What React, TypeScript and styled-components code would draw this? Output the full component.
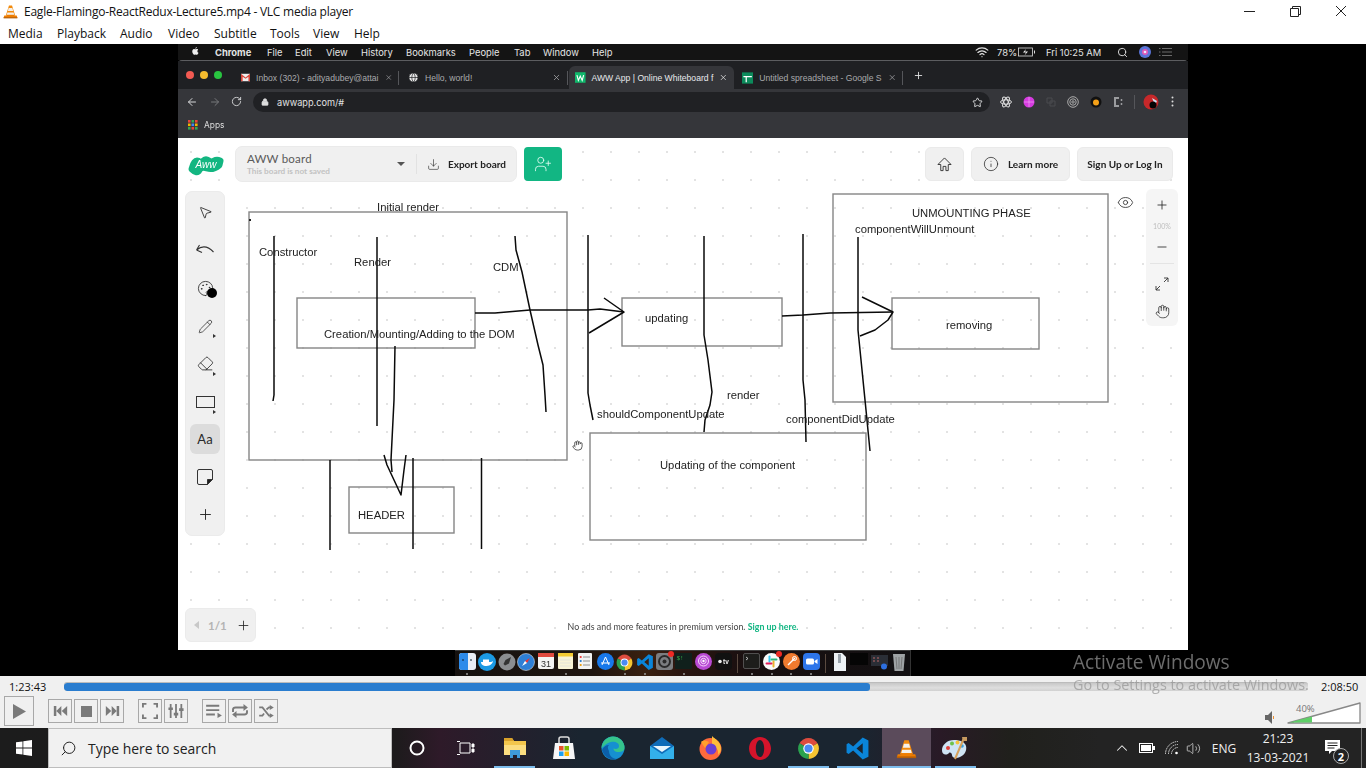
import React from 'react';
import styled, { createGlobalStyle } from 'styled-components';
import {
  Minus, X, Plus, Search, Star, ArrowLeft, ArrowRight, RotateCw, Lock, Globe,
  MousePointer2, Palette, Pencil, Eraser, Info, UserPlus, Download, Eye, Hand, ChevronUp, Volume2, Wifi,
} from 'lucide-react';

const Global = createGlobalStyle`
  html, body { margin: 0; padding: 0; background: #000; }
  * { box-sizing: border-box; }
`;

const Root = styled.div`
  position: relative; width: 1366px; height: 768px; overflow: hidden;
  display: flex; flex-direction: column; background: #fff;
  font-family: "Open Sans", "Noto Sans", sans-serif;
`;
const TitleBar = styled.div`
  height: 22px; background: #fff; display: flex; align-items: center; padding: 0 2px 0 3px;
  font-size: 12px; color: #111;
`;
const TitleText = styled.span` margin-left: 6px; flex: 1; letter-spacing: -0.24px; `;
const WinBtn = styled.div`
  width: 46px; height: 22px; display: flex; align-items: center; justify-content: center; color: #222;
`;
const MenuBar = styled.div`
  height: 22px; background: #fff; display: flex; align-items: center; padding-left: 8px; font-size: 12px; color: #111;
`;
const MenuItem = styled.span<{ $w: number }>` width: ${p => p.$w}px; `;

const VideoArea = styled.div` height: 632px; background: #000; display: flex; justify-content: center; `;
const Screen = styled.div` width: 1010px; display: flex; flex-direction: column; filter: blur(0.3px); `;

const MacBar = styled.div`
  height: 16px; background: #141414; display: flex; align-items: center; color: #e4e4e4;
  font-family: Inter, "Liberation Sans", sans-serif; font-size: 9.4px; padding-left: 13px;
`;
const MacItem = styled.span<{ $w: number; $b?: boolean }>`
  width: ${p => p.$w}px; font-weight: ${p => (p.$b ? 700 : 400)}; flex: none; white-space: nowrap;
`;
const MacRight = styled.div` margin-left: auto; display: flex; align-items: center; height: 100%; padding-right: 16px; `;
const MacGap = styled.i` width: 8px; display: block; flex: none; `;

const ChromeWin = styled.div`
  height: 78px; display: flex; flex-direction: column; border-top: 1px solid #5c5d60; border-radius: 4px 4px 0 0;
  font-family: Inter, "Liberation Sans", sans-serif; color: #c8c9cb; background: #202124;
`;
const TabStrip = styled.div` height: 28px; background: #1f2023; display: flex; align-items: flex-end; padding-left: 8px; `;
const Lights = styled.div` width: 49px; height: 100%; display: flex; align-items: center; gap: 6px; flex: none; padding-bottom: 1px; `;
const Light = styled.i<{ $c: string }>` width: 8px; height: 8px; border-radius: 50%; background: ${p => p.$c}; display: block; `;
const Tab = styled.div<{ $active?: boolean; $w: number }>`
  width: ${p => p.$w}px; height: 23px; display: flex; align-items: center; padding: 0 6px; gap: 6px; flex: none;
  font-family: "Liberation Sans", Arial, sans-serif; font-size: 8.6px; white-space: nowrap;
  background: ${p => (p.$active ? '#35363a' : 'transparent')};
  color: ${p => (p.$active ? '#e8eaed' : '#a9aaac')};
  border-radius: 6px 6px 0 0;
  margin: ${p => (p.$active ? '0 2px 0 1px' : '0')};
`;
const TabTitle = styled.span` flex: 1; `;
const TabSep = styled.i<{ $mr?: number }>`
  width: 1px; height: 14px; background: #55565a; display: block; margin: 0 ${p => p.$mr ?? 0}px 4px 0; flex: none;
`;
const NewTab = styled.div` width: 30px; align-self: center; display: flex; justify-content: center; flex: none; `;
const ToolRow = styled.div`
  height: 25px; background: #35363a; display: flex; align-items: center; padding-left: 8px; color: #d5d6d8;
`;
const NavBtn = styled.div<{ $w: number }>` width: ${p => p.$w}px; display: flex; flex: none; `;
const Omni = styled.div`
  width: 737px; height: 20px; border-radius: 10px; background: #202124; display: flex; align-items: center;
  padding: 0 7px 0 8px; font-size: 9.2px; color: #e0e1e3; gap: 8px; margin: 1px 0 0 2px;
`;
const OmniUrl = styled.span` flex: 1; `;
const ExtRow = styled.div` display: flex; align-items: center; margin-left: 5px; `;
const Ext = styled.div` width: 22.4px; display: flex; justify-content: center; align-items: center; flex: none; `;
const ExtSep = styled.i` width: 1px; height: 14px; background: #55565a; margin: 0 4px 0 5px; display: block; flex: none; `;
const BookRow = styled.div`
  height: 24px; background: #35363a; display: flex; align-items: center; padding: 0 0 2px 10px; gap: 6px; font-size: 8.4px; color: #dcdcdc;
`;

const Board = styled.div`
  position: relative; height: 512px; background-color: #fff;
  background-image: radial-gradient(circle, #e2e2e2 0.7px, transparent 1.1px);
  background-size: 28px 28px; background-position: -1px 0;
  display: flex; flex-direction: column; padding: 8px 7px; font-family: Lato, "Open Sans", sans-serif;
`;
const CanvasSvg = styled.svg` position: absolute; left: 0; top: 0; width: 1010px; height: 512px; `;
const Label = styled.span<{ $x: number; $y: number }>`
  position: absolute; left: ${p => p.$x - 178}px; top: ${p => p.$y - 138 - 7}px;
  font-family: "Liberation Sans", Arial, sans-serif; font-size: 11.25px; line-height: 14px; color: #222; white-space: nowrap;
`;
const CursorMark = styled.div` position: absolute; left: 394px; top: 302px; color: #222; display: flex; `;

const TopRow = styled.div` position: relative; height: 36px; display: flex; align-items: center; padding: 0 8px 0 2px; `;
const BoardBox = styled.div`
  width: 282px; height: 36px; margin-left: 10px; background: #f0f0f0; border: 1px solid #eaeaea; border-radius: 7px;
  display: flex; align-items: center; padding-left: 11px;
`;
const BoardNames = styled.div` flex: 1; display: flex; flex-direction: column; `;
const BoardName = styled.span` font-size: 11.5px; line-height: 14px; color: #5a5a5a; letter-spacing: 0.2px; `;
const BoardSub = styled.span` font-size: 8.2px; line-height: 11px; font-weight: 700; color: #c2c2c2; `;
const Caret = styled.i`
  width: 0; height: 0; border-left: 4px solid transparent; border-right: 4px solid transparent; border-top: 4px solid #555;
  margin-right: 11px; display: block;
`;
const VDiv = styled.i` width: 1px; height: 20px; background: #e2e2e2; display: block; `;
const Export = styled.div`
  display: flex; align-items: center; gap: 8px; padding: 0 10px; font-size: 10px; font-weight: 700; color: #222;
`;
const Invite = styled.div`
  width: 38px; height: 34px; margin-left: 7px; background: #12b683; border-radius: 4px; display: flex; align-items: center; justify-content: center; color: #e8fff6;
`;
const TopBtn = styled.div<{ $w: number; $ml: number }>`
  width: ${p => p.$w}px; height: 34px; margin-left: ${p => p.$ml}px; background: #f0f0f0; border: 1px solid #eaeaea; border-radius: 6px;
  display: flex; align-items: center; justify-content: center; gap: 9px; font-size: 10px; font-weight: 700; color: #222;
`;
const Spacer = styled.div` flex: 1; `;

const MidRow = styled.div` position: relative; display: flex; justify-content: space-between; margin-top: 9px; padding-right: 3px; `;
const LeftTools = styled.div`
  width: 40px; height: 345px; background: #f0f0f0; border: 1px solid #ebebeb; border-radius: 7px; padding-top: 2px;
  display: flex; flex-direction: column; align-items: center;
`;
const ToolSlot = styled.div` height: 37.75px; display: flex; align-items: center; justify-content: center; flex: none; `;
const ToolIcon = styled.div<{ $active?: boolean }>`
  position: relative; width: 30px; height: 30px; border-radius: 6px; display: flex; align-items: center; justify-content: center;
  background: ${p => (p.$active ? '#dcdcdc' : 'transparent')}; color: #2a2a2a; font-size: 13px;
`;
const MoreMark = styled.i`
  position: absolute; right: 4px; bottom: 3px; width: 0; height: 0; display: block;
  border-top: 2px solid transparent; border-bottom: 2px solid transparent; border-left: 3px solid #333;
`;
const ColorDot = styled.i`
  position: absolute; right: 3px; bottom: 5px; width: 10px; height: 10px; border-radius: 50%; background: #000; display: block;
`;
const RightSide = styled.div` display: flex; align-items: flex-start; gap: 12px; margin-top: -2px; `;
const EyeBtn = styled.div` width: 18px; height: 26px; display: flex; align-items: center; justify-content: center; color: #333; `;
const ZoomPanel = styled.div`
  width: 32px; height: 137px; background: #f5f5f5; border-radius: 6px; display: flex; flex-direction: column; align-items: center; color: #222;
`;
const ZoomCell = styled.div<{ $h: number }>` height: ${p => p.$h}px; display: flex; align-items: center; justify-content: center; flex: none; `;
const ZoomPct = styled.span` font-size: 7px; color: #bdbdbd; `;
const ZoomLine = styled.i` width: 24px; height: 1px; background: #e4e4e4; display: block; flex: none; margin-bottom: 5px; `;

const BottomRow = styled.div`
  position: relative; margin-top: auto; display: grid; grid-template-columns: 1fr auto 1fr; align-items: center;
`;
const PagePill = styled.div`
  width: 71px; height: 34px; background: #f0f0f0; border: 1px solid #ebebeb; border-radius: 6px; display: flex; align-items: center; padding-left: 8px; color: #222;
`;
const PageCaret = styled.i`
  width: 0; height: 0; border-top: 4px solid transparent; border-bottom: 4px solid transparent; border-right: 5px solid #c8c8c8; display: block;
`;
const PageNum = styled.span` font-size: 11.5px; font-weight: 700; color: #b4b4b4; margin: 0 9px 0 9px; `;
const Note = styled.div` font-size: 8.85px; color: #444; padding-top: 3px; `;
const NoteLink = styled.b` color: #12b683; `;

const DockRow = styled.div` height: 26px; background: #000; padding-left: 277px; `;
const DockPanel = styled.div`
  width: 456px; height: 26px; background: linear-gradient(90deg, #15110f 0%, #1f1510 30%, #3a2010 42%, #2a1510 50%, #180f10 65%, #121012 100%);
  border-top: 1px solid #3d3d3d; border-right: 1px solid #333; display: flex; padding-left: 2.5px;
`;
const DockItem = styled.div<{ $w?: number }>`
  position: relative; width: ${p => p.$w ?? 19.7}px; height: 25px; flex: none; display: flex; justify-content: center; padding-top: 2px;
`;
const DockDot = styled.i`
  position: absolute; left: 50%; bottom: 1px; width: 2px; height: 2px; margin-left: -1px; border-radius: 50%; background: #9a9a9a; display: block;
`;
const DockSep = styled.i` width: 1px; height: 19px; margin: 3px 4px 0; background: #5a4a40; display: block; flex: none; `;
const Badge = styled.i`
  position: absolute; right: 0; top: 0; width: 6px; height: 6px; border-radius: 50%; background: #ee2a24; display: block;
`;

const Controls = styled.div` height: 52px; background: #f0f0f0; display: flex; flex-direction: column; `;
const SeekRow = styled.div` height: 20px; display: flex; align-items: center; font-size: 11px; color: #111; padding-top: 1px; `;
const SeekTime = styled.span<{ $w: number; $pl: number }>` width: ${p => p.$w}px; padding-left: ${p => p.$pl}px; flex: none; `;
const Track = styled.div`
  width: 1244px; height: 9px; border-radius: 3px; background: linear-gradient(#c8c8c8, #dedede 60%, #d0d0d0);
  border-top: 1px solid #bcbcbc; overflow: hidden;
`;
const TrackFill = styled.div` height: 100%; background: #2a7dcf; border-radius: 3px; `;
const BtnRow = styled.div` height: 32px; display: flex; align-items: flex-start; padding-left: 4px; `;
const CtrlBtn = styled.div<{ $big?: boolean; $gap?: number }>`
  width: ${p => (p.$big ? 30 : 24)}px; height: ${p => (p.$big ? 30 : 24)}px; margin-top: ${p => (p.$big ? 0 : 3)}px;
  margin-left: ${p => p.$gap ?? 2}px; border: 1px solid #a8a8a8; display: flex; align-items: center; justify-content: center; color: #7a7a7a; flex: none;
`;
const VolumeWrap = styled.div` margin-left: auto; display: flex; align-items: flex-end; gap: 12px; margin-top: 6px; padding-right: 5px; `;

const Taskbar = styled.div`
  height: 40px; display: flex; align-items: stretch; color: #fff;
  background: linear-gradient(90deg, #1c1c1c 0, #1d1b1c 395px, #2e1a29 440px, #1a2530 580px, #1a2530 860px, #291a26 940px, #20201c 1010px, #232323 1100px);
`;
const StartBtn = styled.div` width: 48px; display: flex; align-items: center; justify-content: center; flex: none; `;
const SearchBox = styled.div`
  width: 344px; background: #f1f1f1; border: 1px solid #bdbdbd; display: flex; align-items: center; padding-left: 11px; gap: 11px;
  font-size: 13.95px; color: #222; flex: none;
`;
const SearchGlass = styled(Search)` transform: scaleX(-1); `;
const TaskItem = styled.div<{ $on?: boolean; $hl?: boolean }>`
  position: relative; width: 49px; flex: none; display: flex; align-items: center; justify-content: center;
  background: ${p => (p.$hl ? '#5b4b5b' : 'transparent')};
  ${p => p.$on ? `&::after { content: ""; position: absolute; left: ${p.$hl ? 0 : 4}px; right: ${p.$hl ? 0 : 4}px; bottom: 0; height: 2px; background: #7cbcec; }` : ''}
`;
const Tray = styled.div` margin-left: auto; display: flex; align-items: center; font-size: 12px; color: #f0f0f0; `;
const TrayItem = styled.div<{ $w: number }>` width: ${p => p.$w}px; display: flex; align-items: center; justify-content: center; flex: none; position: relative; `;
const Clock = styled.div` width: 68px; display: flex; flex-direction: column; align-items: center; line-height: 19px; font-size: 12px; flex: none; `;
const ShowDesktop = styled.i` width: 5px; height: 40px; margin-left: 7px; border-left: 1px solid #777; display: block; `;
const NotifBadge = styled.span`
  position: absolute; left: 21px; top: 8px; width: 16px; height: 16px; border-radius: 50%; background: #222; border: 1px solid #aaa;
  display: flex; align-items: center; justify-content: center; font-size: 11px; font-weight: 700; color: #fff;
`;

const Activate = styled.div`
  position: absolute; left: 1073px; top: 650px; color: rgba(150,150,150,0.72); pointer-events: none;
  display: flex; flex-direction: column;
`;
const ActTitle = styled.span` font-size: 19.1px; line-height: 24px; `;
const ActSub = styled.span` font-size: 14.4px; line-height: 18px; margin-top: 2px; white-space: nowrap; `;

/* ---- drawings ---- */
const VlcIcon = ({ s = 16 }: { s?: number }) => (
  <svg width={s} height={s} viewBox="0 0 24 24">
    <path d="M9.5 2.5h5l5 16H4.5z" fill="#f28a0c" />
    <path d="M9 6.5h6l1.2 4.5H7.8zM7 13.5h10l1 3.5H6z" fill="#f4f0ea" />
    <path d="M2 18.5h4v-1h12v1h4l1 3.5H1z" fill="#ef7d00" />
    <path d="M1 21h22v2H1z" fill="#b85f05" />
  </svg>
);
const ChromeIcon = ({ s = 18 }: { s?: number }) => (
  <svg width={s} height={s} viewBox="0 0 24 24">
    <path d="M12 12L3.34 7A10 10 0 0 1 20.66 7z" fill="#dd4b3e" />
    <path d="M12 12L20.66 7A10 10 0 0 1 12 22z" fill="#f5c431" />
    <path d="M12 12L12 22A10 10 0 0 1 3.34 7z" fill="#2aa24f" />
    <circle cx="12" cy="12" r="5" fill="#fff" />
    <circle cx="12" cy="12" r="3.9" fill="#4a8af4" />
  </svg>
);
const VsIcon = ({ s = 18 }: { s?: number }) => (
  <svg width={s} height={s} viewBox="0 0 24 24">
    <path fillRule="evenodd" d="M17 1.5L22.5 4.2V19.8L17 22.5L7.8 14L3.5 17.2L1.5 16V8L3.5 6.8L7.8 10zM17 7L11 12L17 17z" fill="#0a85d9" />
  </svg>
);

const Prev = () => <svg width="15" height="12" viewBox="0 0 18 14"><path d="M1 1h3v12H1zM10 1v12L4 7zM17 1v12L10.5 7z" fill="currentColor" /></svg>;
const Next = () => <svg width="15" height="12" viewBox="0 0 18 14"><path d="M1 1v12l6.500-6zM8 1v12l6-6zM14 1h3v12h-3z" fill="currentColor" /></svg>;
const Fs = () => <svg width="16" height="16" viewBox="0 0 18 18"><path d="M1 5V1h4M13 1h4v4M17 13v4h-4M5 17H1v-4" fill="none" stroke="currentColor" strokeWidth="2.2" /></svg>;
const Ext3 = () => <svg width="16" height="16" viewBox="0 0 18 18"><path d="M3 1v16M9 1v16M15 1v16" stroke="currentColor" strokeWidth="2" /><path d="M0.500 5h5v3h-5zM6.500 11h5v3h-5zM12.500 6h5v3h-5z" fill="currentColor" /></svg>;
const PlaylistI = () => <svg width="16" height="14" viewBox="0 0 18 16"><path d="M0 2h15M0 7h15M0 12h10" stroke="currentColor" strokeWidth="2.2" /><path d="M13 10v6l5-3z" fill="currentColor" /></svg>;
const LoopI = () => <svg width="16" height="14" viewBox="0 0 18 16"><path d="M1 9V6.500Q1 4 4 4H14M17 7v2.500Q17 12 14 12H4" fill="none" stroke="currentColor" strokeWidth="2.2" /><path d="M13 0l5 4-5 4zM5 8L0 12l5 4z" fill="currentColor" /></svg>;
const ShuffleI = () => <svg width="15" height="13" viewBox="0 0 18 16"><path d="M0 3h4l8 10h2M0 13h4l2-2.500M9 5.500L12 3h2" fill="none" stroke="currentColor" strokeWidth="2.2" /><path d="M13 0l5 3-5 3zM13 10l5 3-5 3z" fill="currentColor" /></svg>;

const Sketch = () => (
  <CanvasSvg viewBox="178 138 1010 512">
    <g fill="none" stroke="#858585" strokeWidth="1.4">
      <rect x="249" y="212" width="318" height="248" />
      <rect x="297" y="298" width="178" height="50" />
      <rect x="622" y="298" width="160" height="48" />
      <rect x="892" y="298" width="147" height="51" />
      <rect x="833" y="194" width="275" height="208" />
      <rect x="590" y="433" width="276" height="107" />
      <rect x="349" y="487" width="105" height="46" />
    </g>
    <g fill="none" stroke="#0a0a0a" strokeWidth="1.5" strokeLinejoin="round">
      <path d="M274 236V395L273 401" />
      <path d="M377 237V426" />
      <path d="M515 236L516 250L522 272L530 310L538 345L543 365L545 395L546 412" />
      <path d="M588 235V393L590 405L593 420" />
      <path d="M704 236V335L708 360L712 392L710 405L705 420L704 432" />
      <path d="M803 234V380L805 400L806 442" />
      <path d="M858 237V330L862 370L866 410L870 451" />
      <path d="M475 313H495L530 310H588L600 309L624 312" />
      <path d="M604 298L624 312L589 333" />
      <path d="M782 316L803 315L830 313L893 312" />
      <path d="M862 297L893 312L888 320L875 330L860 336" />
      <path d="M395 346L394 400L391 460L392 472" />
      <path d="M384 455L387 465L394 480L401 495L404 470L406 455" />
      <path d="M330 460V550" />
      <path d="M413 458V549" />
      <path d="M481.500 458V549" />
    </g>
    <rect x="249" y="219" width="2" height="2" fill="#222" />
  </CanvasSvg>
);

const labels: [string, number, number][] = [
  ['Initial render', 377, 207], ['Constructor', 259, 252], ['Render', 354, 262], ['CDM', 493, 267],
  ['Creation/Mounting/Adding to the DOM', 324, 334], ['updating', 645, 318], ['removing', 946, 325],
  ['UNMOUNTING PHASE', 912, 213], ['componentWillUnmount', 855, 229], ['render', 727, 395],
  ['shouldComponentUpdate', 597, 414], ['componentDidUpdate', 786, 419],
  ['Updating of the component', 660, 465], ['HEADER', 358, 515],
];

const Logo = () => (
  <svg width="38" height="24" viewBox="0 0 38 24">
    <path d="M5 17Q7 9 10 9T14 13Q17 7 20 8T24 12Q28 7 33 9L32 13Q26 18 20 16T12 18T5 17z" fill="#13b681" stroke="#13b681" strokeWidth="7" strokeLinejoin="round" />
    <text x="19" y="16" textAnchor="middle" fontFamily="Liberation Sans" fontStyle="italic" fontSize="10" fill="#fff">Aww</text>
  </svg>
);

const dockIcons = {
  finder: <svg width="17" height="17" viewBox="0 0 17 17"><rect width="17" height="17" rx="3" fill="#e9eef5" /><path d="M0 3a3 3 0 0 1 3-3h6v17H3a3 3 0 0 1-3-3z" fill="#2d8bea" /><path d="M4 6v2M12 6v2" stroke="#123" /></svg>,
  docker: <svg width="18" height="18" viewBox="0 0 18 18"><circle cx="9" cy="9" r="9" fill="#1b9ae4" /><path d="M3 9h10c1 0 1.500-1 2-1-.2 2-2.500 5-6.500 5S3 11 3 9z" fill="#fff" /><path d="M5 6.500h6V9H5z" fill="#fff" /></svg>,
  rocket: <svg width="18" height="18" viewBox="0 0 18 18"><circle cx="9" cy="9" r="8.500" fill="#8b8d90" /><path d="M13 4L7.500 7 5.500 11l1.500 1.500L11 10.500z" fill="#333" /></svg>,
  safari: <svg width="18" height="18" viewBox="0 0 18 18"><circle cx="9" cy="9" r="8.500" fill="#2e7fd6" stroke="#ddd" strokeWidth=".6" /><path d="M13 5L8 8l2 2z" fill="#e33" /><path d="M5 13l3-5 2 2z" fill="#fff" /></svg>,
  calendar: <svg width="16" height="16" viewBox="0 0 16 16"><rect width="16" height="16" rx="2" fill="#f4f4f4" /><rect width="16" height="4" fill="#e04a3f" /><text x="8" y="13.500" fontSize="9" textAnchor="middle" fontFamily="Liberation Sans" fill="#333">31</text></svg>,
  notes: <svg width="15" height="16" viewBox="0 0 15 16"><rect width="15" height="16" rx="1" fill="#f8f3d6" /><rect width="15" height="3.500" fill="#f4cb33" /><path d="M2 7h11M2 10h11M2 13h11" stroke="#ddd" strokeWidth=".7" /></svg>,
  reminders: <svg width="14" height="16" viewBox="0 0 14 16"><rect width="14" height="16" rx="1" fill="#f2f2f2" /><path d="M5 4h7M5 8h7M5 12h7" stroke="#777" strokeWidth=".8" /><circle cx="2.700" cy="4" r="1.100" fill="#e33" /><circle cx="2.700" cy="8" r="1.100" fill="#27c" /><circle cx="2.700" cy="12" r="1.100" fill="#e90" /></svg>,
  app: <svg width="17" height="17" viewBox="0 0 17 17"><circle cx="8.500" cy="8.500" r="8.500" fill="#1878ea" /><path d="M8.500 4l-3.500 8M8.500 4l3.500 8M4 10h9" stroke="#fff" strokeWidth="1" fill="none" /></svg>,
  settings: <svg width="17" height="17" viewBox="0 0 17 17"><rect width="17" height="17" rx="3" fill="#7b7d80" /><circle cx="8.500" cy="8.500" r="5.500" fill="none" stroke="#2a2a2a" strokeWidth="2" /><circle cx="8.500" cy="8.500" r="2" fill="#2a2a2a" /></svg>,
  term2: <svg width="17" height="16" viewBox="0 0 17 16"><rect width="17" height="16" rx="1" fill="#10201c" /><text x="1.500" y="7" fontSize="6" fontFamily="Liberation Mono" fill="#39b54a">$!</text></svg>,
  podcast: <svg width="17" height="17" viewBox="0 0 17 17"><circle cx="8.500" cy="8.500" r="8.500" fill="#b94ad4" /><circle cx="8.500" cy="8" r="5" fill="none" stroke="#f4d9fa" /><circle cx="8.500" cy="8" r="2.700" fill="none" stroke="#f4d9fa" /><circle cx="8.500" cy="8" r="1.200" fill="#fff" /></svg>,
  tv: <svg width="17" height="17" viewBox="0 0 17 17"><rect width="17" height="17" rx="4" fill="#111" /><circle cx="5" cy="8.500" r="1.800" fill="#eee" /><text x="11" y="11" fontSize="6.500" textAnchor="middle" fontFamily="Liberation Sans" fontWeight="700" fill="#eee">tv</text></svg>,
  terminal: <svg width="17" height="16" viewBox="0 0 17 16"><rect x=".5" y=".5" width="16" height="15" rx="1.500" fill="#1d1d1b" stroke="#777" strokeWidth=".6" /><path d="M3 4l2 1.500L3 7" stroke="#ddd" fill="none" strokeWidth=".8" /></svg>,
  slack: <svg width="17" height="17" viewBox="0 0 17 17"><circle cx="8.500" cy="8.500" r="8.500" fill="#fafafa" /><path d="M6.500 3.500v5" stroke="#36c5f0" strokeWidth="2" strokeLinecap="round" /><path d="M8.500 6.500h5" stroke="#2eb67d" strokeWidth="2" strokeLinecap="round" /><path d="M10.500 8.500v5" stroke="#ecb22e" strokeWidth="2" strokeLinecap="round" /><path d="M3.500 10.500h5" stroke="#e01e5a" strokeWidth="2" strokeLinecap="round" /></svg>,
  postman: <svg width="17" height="17" viewBox="0 0 17 17"><circle cx="8.500" cy="8.500" r="8.500" fill="#ef7a2f" /><path d="M5 12L12 5" stroke="#fff" strokeWidth="1.500" /><circle cx="11.500" cy="5.500" r="2" fill="none" stroke="#fff" /></svg>,
  zoom: <svg width="17" height="17" viewBox="0 0 17 17"><rect width="17" height="17" rx="4" fill="#2d75ea" /><rect x="3" y="5.500" width="8" height="6" rx="1.500" fill="#fff" /><path d="M11.500 8l3-2v5l-3-2z" fill="#fff" /></svg>,
  file: <svg width="14" height="18" viewBox="0 0 14 18"><path d="M1 0h8l4 4v14H1z" fill="#eef2f6" /><path d="M5 1h3v9H5z" fill="#9aa3ac" /></svg>,
  black: <svg width="18" height="12" viewBox="0 0 18 12"><rect width="18" height="12" fill="#050505" /></svg>,
  shot: <svg width="17" height="17" viewBox="0 0 17 17"><rect y="2" width="17" height="11" fill="#2a2e36" /><path d="M2 5h2M6 5h2M2 8h2M6 8h2" stroke="#b66" /><circle cx="13" cy="13.500" r="3" fill="#2d6fe0" /></svg>,
  trash: <svg width="14" height="18" viewBox="0 0 14 18"><path d="M1 1h12l-1.500 17h-9z" fill="#9fa3a5" /><path d="M4 4l1 12M7 4v12M10 4l-1 12" stroke="#666" strokeWidth=".7" /></svg>,
};

const App: React.FC = () => (
  <Root>
    <Global />
    <TitleBar>
      <VlcIcon s={15} />
      <TitleText>Eagle-Flamingo-ReactRedux-Lecture5.mp4 - VLC media player</TitleText>
      <WinBtn><svg width="11" height="11"><path d="M0 5.500h11" stroke="#222" /></svg></WinBtn>
      <WinBtn><svg width="11" height="11"><path d="M.5 2.500h8v8h-8zM2.500 2.500v-2h8v8h-2" fill="none" stroke="#222" /></svg></WinBtn>
      <WinBtn><svg width="12" height="12"><path d="M1 1l10 10M11 1L1 11" stroke="#222" /></svg></WinBtn>
    </TitleBar>
    <MenuBar>
      {([['Media', 49], ['Playback', 63], ['Audio', 48], ['Video', 46], ['Subtitle', 56], ['Tools', 43], ['View', 41], ['Help', 40]] as [string, number][]).map(([t, w]) => (
        <MenuItem key={t} $w={w}>{t}</MenuItem>
      ))}
    </MenuBar>
    <VideoArea>
      <Screen>
        <MacBar>
          <MacItem $w={24}>
            <svg width="9" height="10" viewBox="0 0 24 24" fill="#eee"><path d="M17 12.500c0-2.600 2.100-3.800 2.200-3.900-1.200-1.800-3-2-3.700-2-1.600-.2-3 .9-3.800.9s-2-.9-3.300-.9C6.700 6.700 5.100 7.700 4.200 9.200c-1.800 3.100-.5 7.800 1.300 10.300.9 1.200 1.900 2.600 3.300 2.500 1.300-.1 1.800-.8 3.400-.8s2 .8 3.400.8 2.300-1.200 3.200-2.500c1-1.400 1.400-2.800 1.400-2.900-.1 0-3.200-1.200-3.200-4.100zM14.400 4.800c.7-.9 1.200-2.100 1.100-3.300-1 0-2.300.7-3 1.500-.7.800-1.300 2-1.100 3.200 1.100.1 2.300-.6 3-1.400z" /></svg>
          </MacItem>
          <MacItem $w={52} $b>Chrome</MacItem>
          <MacItem $w={28}>File</MacItem>
          <MacItem $w={31}>Edit</MacItem>
          <MacItem $w={35}>View</MacItem>
          <MacItem $w={45}>History</MacItem>
          <MacItem $w={63}>Bookmarks</MacItem>
          <MacItem $w={45}>People</MacItem>
          <MacItem $w={29}>Tab</MacItem>
          <MacItem $w={49}>Window</MacItem>
          <MacItem $w={30}>Help</MacItem>
          <MacRight>
            <Wifi size={14} strokeWidth={2} />
            <MacGap />
            <MacItem $w={21}>78%</MacItem>
            <svg width="28" height="10" viewBox="0 0 28 10"><rect x=".5" y="1" width="14" height="8" fill="none" stroke="#ddd" strokeWidth=".8" /><path d="M8 2L5 5.500h3L6.500 8.500 10 4.500H7z" fill="#eee" /><rect x="16" y="3.500" width="1" height="3" fill="#ddd" /></svg>
            <MacItem $w={71}>Fri 10:25 AM</MacItem>
            <Search size={11} />
            <svg width="31" height="12" viewBox="0 0 31 12"><circle cx="17" cy="6" r="6" fill="#5a74d8" /><circle cx="17" cy="6" r="3" fill="#e05ab8" /><circle cx="17" cy="6" r="1.300" fill="#e8e8ff" /></svg>
            <svg width="13" height="10" viewBox="0 0 13 10"><path d="M3 1.500h10M3 5h10M3 8.500h10M0 1.500h1.500M0 5h1.500M0 8.500h1.500" stroke="#6a6a6a" /></svg>
          </MacRight>
        </MacBar>
        <ChromeWin>
          <TabStrip>
            <Lights><Light $c="#f25a52" /><Light $c="#f5bb2e" /><Light $c="#29c440" /></Lights>
            <Tab $w={163}>
              <svg width="11" height="9" viewBox="0 0 11 9"><rect width="11" height="9" fill="#eee" /><path d="M0 0l5.500 4.500L11 0v9H9V3.500L5.500 6 2 3.500V9H0z" fill="#d8463a" /></svg>
              <TabTitle>Inbox (302) - adityadubey@attai</TabTitle>
              <X size={9} />
            </Tab>
            <TabSep $mr={3} />
            <Tab $w={165}>
              <Globe size={11} color="#1f2023" fill="#e8e8e8" strokeWidth={1.5} />
              <TabTitle>Hello, world!</TabTitle>
              <X size={9} />
            </Tab>
            <TabSep />
            <Tab $w={165} $active>
              <svg width="11" height="11" viewBox="0 0 11 11"><rect width="11" height="11" fill="#10b86c" /><path d="M2 3l1.500 5.500L5.500 4l2 4.500L9 3" fill="none" stroke="#fff" strokeWidth="1.200" /></svg>
              <TabTitle>AWW App | Online Whiteboard f</TabTitle>
              <X size={9} color="#eee" />
            </Tab>
            <Tab $w={166}>
              <svg width="12" height="12" viewBox="0 0 12 12"><rect width="12" height="12" fill="#0c8a5b" /><path d="M1.500 4.500h9M4.500 4.500v6" stroke="#fff" strokeWidth="1.300" /></svg>
              <TabTitle>Untitled spreadsheet - Google S</TabTitle>
              <X size={9} />
            </Tab>
            <TabSep />
            <NewTab><Plus size={11} color="#ddd" /></NewTab>
          </TabStrip>
          <ToolRow>
            <NavBtn $w={23}><ArrowLeft size={12} /></NavBtn>
            <NavBtn $w={22}><ArrowRight size={12} color="#77787b" /></NavBtn>
            <NavBtn $w={20}><RotateCw size={11} /></NavBtn>
            <Omni>
              <Lock size={8} fill="#ddd" />
              <OmniUrl>awwapp.com/#</OmniUrl>
              <Star size={11} />
            </Omni>
            <ExtRow>
              <Ext><svg width="12" height="12" viewBox="0 0 12 12" fill="none" stroke="#ddd" strokeWidth="1"><ellipse cx="6" cy="6" rx="5.500" ry="2.200" /><ellipse cx="6" cy="6" rx="5.500" ry="2.200" transform="rotate(60 6 6)" /><ellipse cx="6" cy="6" rx="5.500" ry="2.200" transform="rotate(120 6 6)" /></svg></Ext>
              <Ext><svg width="12" height="12"><circle cx="6" cy="6" r="5.500" fill="#d63be0" /><path d="M1 6h10M6 1v10" stroke="#f3b3f6" strokeWidth=".6" /></svg></Ext>
              <Ext><svg width="12" height="12"><path d="M2 2h5v5H2zM5 5h5v5H5z" fill="none" stroke="#4a4b4e" /></svg></Ext>
              <Ext><svg width="12" height="12" fill="none" stroke="#aaa"><circle cx="6" cy="6" r="5.300" /><circle cx="6" cy="6" r="3.200" /><circle cx="6" cy="6" r="1.200" /></svg></Ext>
              <Ext><svg width="12" height="12"><circle cx="6" cy="6" r="5.500" fill="#111" /><circle cx="6" cy="6.500" r="3" fill="#f4a018" /></svg></Ext>
              <Ext><svg width="12" height="12"><path d="M7 2H3v8h4" fill="none" stroke="#9a9b9e" strokeWidth="2" /><path d="M9.500 3v2M9.500 7v2" stroke="#9a9b9e" strokeWidth="1.500" /></svg></Ext>
              <ExtSep />
              <Ext><svg width="16" height="16"><circle cx="8" cy="8" r="7.500" fill="#c6282a" /><path d="M9 4l5 3-2 4z" fill="#cfe3f4" /><circle cx="10" cy="11" r="3.500" fill="#050505" /></svg></Ext>
              <Ext><svg width="3" height="11"><circle cx="1.500" cy="1.500" r="1" fill="#ddd" /><circle cx="1.500" cy="5.500" r="1" fill="#ddd" /><circle cx="1.500" cy="9.500" r="1" fill="#ddd" /></svg></Ext>
            </ExtRow>
          </ToolRow>
          <BookRow>
            <svg width="10" height="10" viewBox="0 0 10 10">
              {[0, 1, 2].flatMap(r => [0, 1, 2].map(c => (
                <rect key={`${r}${c}`} x={c * 3.5} y={r * 3.5} width="2.600" height="2.600" fill={['#e8453c', '#f4b400', '#34a853', '#4285f4'][(r + c * 2) % 4]} />
              )))}
            </svg>
            <span>Apps</span>
          </BookRow>
        </ChromeWin>
        <Board>
          <Sketch />
          {labels.map(([t, x, y]) => <Label key={t} $x={x} $y={y}>{t}</Label>)}
          <CursorMark><Hand size={11} fill="#fff" strokeWidth={1.6} /></CursorMark>
          <TopRow>
            <Logo />
            <BoardBox>
              <BoardNames>
                <BoardName>AWW board</BoardName>
                <BoardSub>This board is not saved</BoardSub>
              </BoardNames>
              <Caret />
              <VDiv />
              <Export><Download size={13} strokeWidth={1.1} />Export board</Export>
            </BoardBox>
            <Invite><UserPlus size={18} strokeWidth={1.1} /></Invite>
            <Spacer />
            <TopBtn $w={39} $ml={0}>
              <svg width="15" height="15" viewBox="0 0 16 16" fill="none" stroke="#333" strokeWidth="1" strokeLinejoin="round"><path d="M1 8L8 1l7 7h-3v6.500H9.500V10h-3v4.500H4V8z" /></svg>
            </TopBtn>
            <TopBtn $w={99} $ml={7}><Info size={16} strokeWidth={1.1} />Learn more</TopBtn>
            <TopBtn $w={96} $ml={7}>Sign Up or Log In</TopBtn>
          </TopRow>
          <MidRow>
            <LeftTools>
              <ToolSlot><ToolIcon><MousePointer2 size={15} strokeWidth={1.4} /></ToolIcon></ToolSlot>
              <ToolSlot><ToolIcon><svg width="20" height="14" viewBox="0 0 20 14" fill="none" stroke="#333" strokeWidth="1.1"><path d="M1.500 6Q10 -1 18.500 8M1.500 6L4.500 1M1.500 6L7 8.500" /></svg></ToolIcon></ToolSlot>
              <ToolSlot><ToolIcon><Palette size={17} strokeWidth={1.2} /><ColorDot /></ToolIcon></ToolSlot>
              <ToolSlot><ToolIcon><Pencil size={15} strokeWidth={1.2} /><MoreMark /></ToolIcon></ToolSlot>
              <ToolSlot><ToolIcon><Eraser size={17} strokeWidth={1.2} /><MoreMark /></ToolIcon></ToolSlot>
              <ToolSlot><ToolIcon><svg width="19" height="12" viewBox="0 0 19 12"><rect x=".5" y=".5" width="18" height="11" fill="none" stroke="#333" /></svg><MoreMark /></ToolIcon></ToolSlot>
              <ToolSlot><ToolIcon $active>Aa</ToolIcon></ToolSlot>
              <ToolSlot><ToolIcon><svg width="16" height="16" viewBox="0 0 16 16" fill="none" stroke="#333" strokeWidth="1"><path d="M10.500 15.500H2a1.500 1.500 0 0 1-1.500-1.500V2A1.500 1.500 0 0 1 2 .5h12A1.500 1.500 0 0 1 15.500 2v8.500z" /><path d="M10.500 15.500v-5h5z" fill="#222" /></svg></ToolIcon></ToolSlot>
              <ToolSlot><ToolIcon><Plus size={17} strokeWidth={1.3} color="#222" /></ToolIcon></ToolSlot>
            </LeftTools>
            <RightSide>
              <EyeBtn><Eye size={17} strokeWidth={1.2} /></EyeBtn>
              <ZoomPanel>
                <ZoomCell $h={32}><Plus size={14} strokeWidth={1.4} /></ZoomCell>
                <ZoomCell $h={10}><ZoomPct>100%</ZoomPct></ZoomCell>
                <ZoomCell $h={32}><Minus size={14} strokeWidth={1.4} /></ZoomCell>
                <ZoomLine />
                <ZoomCell $h={30}><svg width="16" height="16" viewBox="0 0 16 16" fill="none" stroke="#333" strokeWidth=".9"><path d="M10 2h4v4M14 2L10 6M6 14H2v-4M2 14l4-4" /></svg></ZoomCell>
                <ZoomCell $h={24}><Hand size={15} strokeWidth={1.2} /></ZoomCell>
              </ZoomPanel>
            </RightSide>
          </MidRow>
          <BottomRow>
            <PagePill>
              <PageCaret />
              <PageNum>1/1</PageNum>
              <Plus size={15} strokeWidth={1.3} />
            </PagePill>
            <Note>No ads and more features in premium version. <NoteLink>Sign up here.</NoteLink></Note>
            <Spacer />
          </BottomRow>
        </Board>
        <DockRow>
          <DockPanel>
            <DockItem>{dockIcons.finder}<DockDot /></DockItem>
            <DockItem>{dockIcons.docker}</DockItem>
            <DockItem>{dockIcons.rocket}</DockItem>
            <DockItem>{dockIcons.safari}</DockItem>
            <DockItem>{dockIcons.calendar}</DockItem>
            <DockItem>{dockIcons.notes}<DockDot /></DockItem>
            <DockItem>{dockIcons.reminders}</DockItem>
            <DockItem>{dockIcons.app}</DockItem>
            <DockItem><ChromeIcon s={19} /><DockDot /></DockItem>
            <DockItem><VsIcon s={18} /><DockDot /></DockItem>
            <DockItem>{dockIcons.settings}<Badge /></DockItem>
            <DockItem>{dockIcons.term2}<DockDot /></DockItem>
            <DockItem>{dockIcons.podcast}</DockItem>
            <DockItem>{dockIcons.tv}</DockItem>
            <DockSep />
            <DockItem>{dockIcons.terminal}<DockDot /></DockItem>
            <DockItem>{dockIcons.slack}<Badge /><DockDot /></DockItem>
            <DockItem>{dockIcons.postman}<DockDot /></DockItem>
            <DockItem>{dockIcons.zoom}<DockDot /></DockItem>
            <DockSep />
            <DockItem>{dockIcons.file}</DockItem>
            <DockItem>{dockIcons.black}</DockItem>
            <DockItem>{dockIcons.shot}</DockItem>
            <DockItem>{dockIcons.trash}</DockItem>
          </DockPanel>
        </DockRow>
      </Screen>
    </VideoArea>
    <Controls>
      <SeekRow>
        <SeekTime $w={64} $pl={9}>1:23:43</SeekTime>
        <Track><TrackFill style={{ width: `${((870 - 64) / 1244) * 100}%` }} /></Track>
        <SeekTime $w={58} $pl={13}>2:08:50</SeekTime>
      </SeekRow>
      <BtnRow>
        <CtrlBtn $big $gap={0}><svg width="13" height="15" viewBox="0 0 13 15"><path d="M0 0l13 7.500L0 15z" fill="currentColor" /></svg></CtrlBtn>
        <CtrlBtn $gap={14}><Prev /></CtrlBtn>
        <CtrlBtn><svg width="11" height="11"><rect width="11" height="11" fill="currentColor" /></svg></CtrlBtn>
        <CtrlBtn><Next /></CtrlBtn>
        <CtrlBtn $gap={14}><Fs /></CtrlBtn>
        <CtrlBtn><Ext3 /></CtrlBtn>
        <CtrlBtn $gap={14}><PlaylistI /></CtrlBtn>
        <CtrlBtn><LoopI /></CtrlBtn>
        <CtrlBtn><ShuffleI /></CtrlBtn>
        <VolumeWrap>
          <svg width="10" height="13" viewBox="0 0 10 13"><path d="M0 4h3l4-4v13L3 9H0z" fill="#666" /><path d="M8.500 5v3" stroke="#f09030" /></svg>
          <svg width="74" height="22" viewBox="0 0 74 22">
            <path d="M1 21L73 1V21z" fill="#fff" stroke="#888" strokeWidth="1.300" strokeLinejoin="round" />
            <path d="M2 20.500L25 14.500V20.500z" fill="#5fcf68" />
            <text x="9" y="10" fontFamily="Open Sans" fontSize="9.500" fill="#777">40%</text>
          </svg>
        </VolumeWrap>
      </BtnRow>
    </Controls>
    <Taskbar>
      <StartBtn><svg width="16" height="16" viewBox="0 0 16 16" fill="#fff"><path d="M0 2.300l6.500-.9v6.200H0zM7.300 1.300L16 0v7.600H7.300zM0 8.400h6.500v6.200L0 13.700zM7.300 8.400H16V16l-8.700-1.300z" /></svg></StartBtn>
      <SearchBox><SearchGlass size={17} strokeWidth={1.4} />Type here to search</SearchBox>
      <TaskItem><svg width="16" height="16"><circle cx="8" cy="8" r="6.500" fill="none" stroke="#fff" strokeWidth="2" /></svg></TaskItem>
      <TaskItem><svg width="18" height="16" viewBox="0 0 18 16" fill="none" stroke="#fff"><path d="M3 3h10v10H3zM0 1.500h3M0 14.500h3" /><path d="M15 4h2v3h-2zM15 9h2v3h-2z" fill="#fff" /></svg></TaskItem>
      <TaskItem $on><svg width="24" height="22" viewBox="0 0 24 22"><path d="M1 1h8l2 3h12v14H1z" fill="#f3c64c" /><path d="M1 1h8l2 3H1z" fill="#d9a12a" /><path d="M1 8h22v10H1z" fill="#fbdd80" /><path d="M7 13h10v8h-3v-3h-4v3H7z" fill="#3f9ad8" /></svg></TaskItem>
      <TaskItem><svg width="24" height="24" viewBox="0 0 24 24"><path d="M3 7h18l2 16H1z" fill="#f6f6f6" /><path d="M7 7V3q0-2 2-2h6q2 0 2 2v4" fill="none" stroke="#ddd" strokeWidth="1.500" /><path d="M7 10h4.500v4.500H7z" fill="#e8532a" /><path d="M12.500 10H17v4.500h-4.500z" fill="#7fba00" /><path d="M7 15.500h4.500V20H7z" fill="#1ea1f1" /><path d="M12.500 15.500H17V20h-4.500z" fill="#fcb900" /></svg></TaskItem>
      <TaskItem><svg width="24" height="24" viewBox="0 0 24 24"><circle cx="12" cy="12" r="11.500" fill="#1690d0" /><path d="M12 .5a11.500 11.500 0 0 1 11.500 11.500c0 3-3 4-6 4-4 0-5-2-5-3.500 3 1 5.500 0 5.500-2.500C18 7 14 5 10 6 5 7 2.500 11 .5 12 1 5.500 6 .5 12 .5z" fill="#35c48c" /><path d="M8 15c0 4 3 8 8 8-6 2-13-2-15-9 1-3 4-5 7-5-2 2-1 3.500 0 6z" fill="#0c5fa8" /></svg></TaskItem>
      <TaskItem><svg width="24" height="23" viewBox="0 0 24 23"><path d="M12 0l12 9v13H0V9z" fill="#0f6cb8" /><path d="M0 9l12 8 12-8v13H0z" fill="#33b0ea" /><path d="M3 9h18l-9 6z" fill="#e9f6fd" /></svg></TaskItem>
      <TaskItem><svg width="23" height="24" viewBox="0 0 23 24"><circle cx="11.500" cy="13" r="11" fill="#ff6a3c" /><path d="M13 0c3 3 9 6 9 13 0 3-2 5-3 6 1-5-2-8-6-11z" fill="#ffbc3a" /><circle cx="12" cy="13" r="5.500" fill="#6a3fd4" /><path d="M2 6c2-2 5-2 8 0L6 12z" fill="#ffa02c" /></svg></TaskItem>
      <TaskItem><svg width="22" height="23" viewBox="0 0 22 23"><path fillRule="evenodd" d="M11 0C17 0 22 5 22 11.500S17 23 11 23 0 18 0 11.500 5 0 11 0zM11 3C8.500 3 6.800 7 6.800 11.500S8.500 20 11 20s4.200-4 4.200-8.500S13.500 3 11 3z" fill="#d5142b" /></svg></TaskItem>
      <TaskItem $on><ChromeIcon s={25} /></TaskItem>
      <TaskItem $on><VsIcon s={25} /></TaskItem>
      <TaskItem $on $hl><VlcIcon s={21} /></TaskItem>
      <TaskItem $on><svg width="27" height="25" viewBox="0 0 27 25"><path d="M12 4C5 4 0 9 0 14c0 6 6 5 7 3 1-1 3 0 3 2 0 3 4 4 8 2 5-2 7-7 6-11-1-4-6-6-12-6z" fill="#cfe4f4" /><circle cx="6" cy="12" r="2" fill="#e0403a" /><circle cx="10" cy="7.500" r="2" fill="#6cc24a" /><circle cx="15.500" cy="6.500" r="2" fill="#f5c33b" /><circle cx="20" cy="10" r="1.800" fill="#3aa0e0" /><path d="M22 2L13 23" stroke="#d7a15a" strokeWidth="2" /><path d="M20 1h5v4h-4z" fill="#c69a60" /></svg></TaskItem>
      <Tray>
        <TrayItem $w={24}><ChevronUp size={18} strokeWidth={1.4} /></TrayItem>
        <TrayItem $w={26}><svg width="16" height="10" viewBox="0 0 16 10"><rect x=".5" y=".5" width="13" height="9" fill="none" stroke="#fff" /><rect x="2" y="2" width="10" height="6" fill="#fff" /><rect x="14" y="3" width="2" height="4" fill="#fff" /></svg></TrayItem>
        <TrayItem $w={23}><svg width="14" height="14" viewBox="0 0 14 14" fill="none" stroke="#ddd"><path d="M0.500 13A12.500 12.500 0 0 1 13 .5M3.500 13A9.500 9.500 0 0 1 13 3.500M6.500 13A6.500 6.500 0 0 1 13 6.500" strokeDasharray="1.500 .8" /><circle cx="11.500" cy="12" r="1.300" fill="#fff" stroke="none" /></svg></TrayItem>
        <TrayItem $w={21}><Volume2 size={15} strokeWidth={1.1} /></TrayItem>
        <TrayItem $w={40}>ENG</TrayItem>
        <Clock><span>21:23</span><span>13-03-2021</span></Clock>
        <TrayItem $w={42}>
          <svg width="16" height="16" viewBox="0 0 16 16"><path d="M0 0h15v11H7l-3 3v-3H0z" fill="#fff" /><path d="M2.500 3h10M2.500 5.500h10M2.500 8h7" stroke="#222" /></svg>
          <NotifBadge>2</NotifBadge>
        </TrayItem>
        <ShowDesktop />
      </Tray>
    </Taskbar>
    <Activate>
      <ActTitle>Activate Windows</ActTitle>
      <ActSub>Go to Settings to activate Windows.</ActSub>
    </Activate>
  </Root>
);

export default App;
